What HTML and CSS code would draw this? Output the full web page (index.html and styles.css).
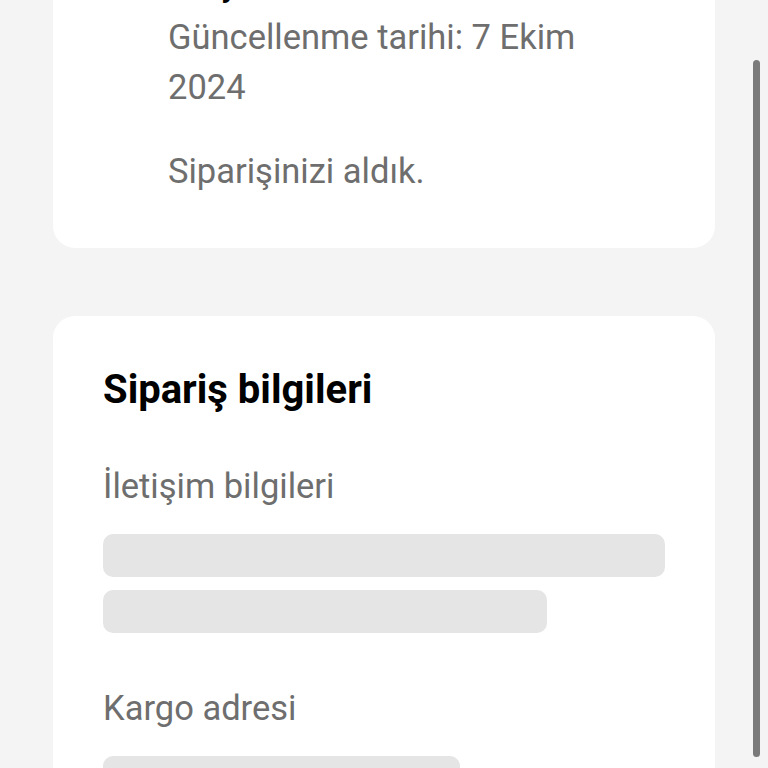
FILE: index.html
```html
<!DOCTYPE html>
<html lang="tr">
  <head>
    <meta charset="utf-8">
    <title>Sipariş durumu</title>
    <link rel="stylesheet" href="styles.css">
  </head>
  <body>
    <div class="page">
      <div class="card status">
        <div class="statusHead">
          <span class="statusIcon">
            <svg width="34" height="34" viewBox="0 0 24 24" fill="none" stroke="#000" stroke-width="1.8" stroke-linecap="round" stroke-linejoin="round">
              <circle cx="12" cy="12" r="10"></circle>
              <path d="M7.5 12.5l3 3 6-6.5"></path>
            </svg>
          </span>
          <h2 class="statusTitle">Onaylandı</h2>
        </div>
        <div class="statusBody">
          <p class="muted">Güncellenme tarihi: 7 Ekim<br>2024</p>
          <p class="muted">Siparişinizi aldık.</p>
        </div>
      </div>

      <div class="card info">
        <h2 class="infoTitle">Sipariş bilgileri</h2>
        <div class="group">
          <p class="muted">İletişim bilgileri</p>
          <div class="bars">
            <div class="bar full"></div>
            <div class="bar mid"></div>
          </div>
        </div>
        <div class="group">
          <p class="muted">Kargo adresi</p>
          <div class="bars">
            <div class="bar short"></div>
            <div class="bar mid"></div>
          </div>
        </div>
      </div>
    </div>
    <div class="scrollbar"></div>
  </body>
</html>
```

FILE: styles.css
```css
* {
  box-sizing: border-box;
}
html, body {
  margin: 0;
  height: 768px;
  overflow: hidden;
}
body {
  background: #f4f4f4;
  font-family: Roboto, "Liberation Sans", sans-serif;
  color: #000;
}
.page {
  display: flex;
  flex-direction: column;
  gap: 68px;
  padding: 0 53px;
  margin-top: -83px;
}
.card {
  background: #fff;
  border-radius: 22px;
  padding: 50px;
}
.status {
  padding-bottom: 52px;
}
.statusHead {
  display: flex;
  align-items: flex-start;
}
.statusIcon {
  width: 65px;
  height: 34px;
  display: flex;
}
.statusTitle {
  margin: 0;
  font-size: 30px;
  line-height: 40px;
  font-weight: 700;
}
.statusBody {
  padding-left: 65px;
  padding-top: 5px;
  display: flex;
  flex-direction: column;
  gap: 34px;
}
.muted {
  margin: 0;
  color: #6e6e6e;
  font-size: 34.5px;
  line-height: 50px;
}
.infoTitle {
  margin: 0;
  font-size: 40px;
  line-height: 48px;
  font-weight: 700;
}
.info .group {
  margin-top: 47px;
}
.info .group + .group {
  margin-top: 50px;
}
.bars {
  margin-top: 23px;
  display: flex;
  flex-direction: column;
  gap: 13px;
}
.bar {
  height: 43px;
  border-radius: 10px;
  background: #e5e5e5;
}
.bar.full { width: 100%; }
.bar.mid { width: 444px; }
.bar.short { width: 357px; }

.scrollbar {
  position: fixed;
  top: 60px;
  right: 8px;
  width: 7px;
  height: 697px;
  border-radius: 4px;
  background: #7a7a7a;
}
```
